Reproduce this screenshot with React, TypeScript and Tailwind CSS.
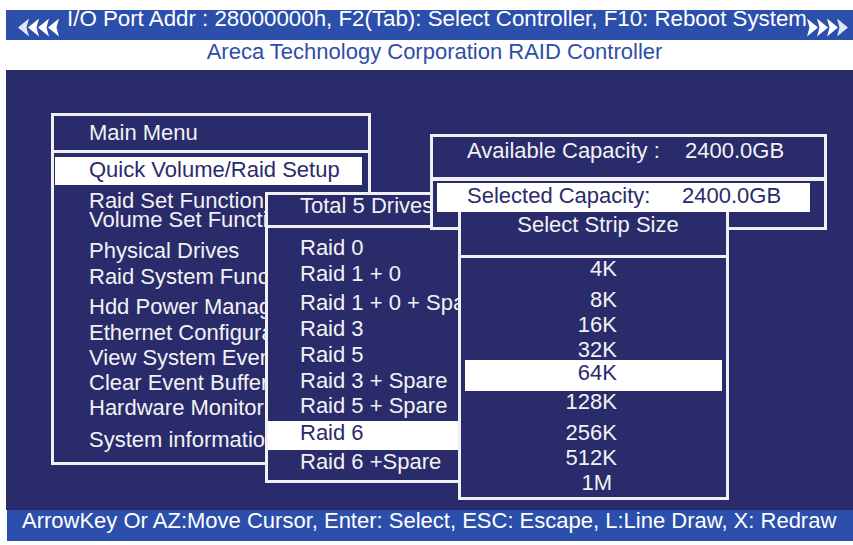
import React from "react";

function Arrows({ dir }: { dir: "left" | "right" }) {
  const offs = [0, 10, 20, 30];
  return (
    <svg width="42" height="19" viewBox="0 0 42 19" className="shrink-0">
      {offs.map((o, i) => (
        <polygon
          key={i}
          points={
            dir === "left"
              ? `${o},9.5 ${o + 11},0.5 ${o + 8.5},9.5 ${o + 11},18.5`
              : `${o + 11},9.5 ${o},0.5 ${o + 2.5},9.5 ${o},18.5`
          }
          fill={dir === "left" ? (i === 0 ? "#dfe6f7" : "#ffffff") : i === 3 ? "#dfe6f7" : "#ffffff"}
        />
      ))}
    </svg>
  );
}

export default function App() {
  return (
    <div className="w-[853px] h-[545px] bg-white overflow-hidden font-['Liberation_Sans',Arial,sans-serif] text-[22px] whitespace-nowrap">
      {/* Top bar */}
      <div className="mt-[10px] ml-[6px] h-[30px] bg-[#2c4fab] flex items-start text-white">
        <div className="ml-[12px] mt-[8px]">
          <Arrows dir="left" />
        </div>
        <div className="ml-[7px] leading-[18px] text-[22.3px]">
          I/O Port Addr : 28000000h, F2(Tab): Select Controller, F10: Reboot System
        </div>
        <div className="ml-auto mr-[5px] mt-[8px]">
          <Arrows dir="right" />
        </div>
      </div>

      {/* Title */}
      <div className="h-[30px] leading-[24px] text-center pl-[16px] text-[#2f4ea6]">
        Areca Technology Corporation RAID Controller
      </div>

      {/* Desktop area */}
      <div className="relative ml-[6px] h-[440px] bg-[#2a2b6b] text-[#f2f2f4]">
        {/* Main Menu */}
        <div className="absolute left-[45px] top-[43px] w-[320px] h-[352px] border-[3px] border-[#f0f0f4] overflow-hidden flex flex-col">
          <div className="h-[37px] leading-[34px] pl-[35px] border-b-[3px] border-[#f0f0f4] shrink-0">
            Main Menu
          </div>
          <div className="flex flex-col">
            <div className="mt-[4px] ml-[1px] mr-[6px] h-[28px] leading-[25px] pl-[34px] bg-white text-[#2a2b6b]">
              Quick Volume/Raid Setup
            </div>
            <div className="mt-[3px] h-[26px] leading-[26px] pl-[35px]">Raid Set Function</div>
            <div className="-mt-[7px] h-[26px] leading-[26px] pl-[35px]">Volume Set Function</div>
            <div className="mt-[5px] h-[26px] leading-[26px] pl-[35px]">Physical Drives</div>
            <div className="h-[26px] leading-[26px] pl-[35px]">Raid System Function</div>
            <div className="mt-[4px] h-[26px] leading-[26px] pl-[35px]">Hdd Power Management</div>
            <div className="h-[26px] leading-[26px] pl-[35px]">Ethernet Configuration</div>
            <div className="-mt-[1px] h-[26px] leading-[26px] pl-[35px]">View System Events</div>
            <div className="-mt-[1px] h-[26px] leading-[26px] pl-[35px]">Clear Event Buffer</div>
            <div className="-mt-[1px] h-[26px] leading-[26px] pl-[35px]">Hardware Monitor</div>
            <div className="mt-[6px] h-[26px] leading-[26px] pl-[35px]">System information</div>
          </div>
        </div>

        {/* Raid level menu */}
        <div className="absolute left-[259px] top-[122px] w-[196px] h-[291px] border-[3px] border-[#f0f0f4] bg-[#2a2b6b] overflow-hidden flex flex-col">
          <div className="h-[33px] leading-[22px] pl-[32px] border-b-[3px] border-[#f0f0f4] shrink-0">
            Total 5 Drives
          </div>
          <div className="flex flex-col">
            <div className="mt-[7px] h-[26px] leading-[26px] pl-[32px]">Raid 0</div>
            <div className="h-[26px] leading-[26px] pl-[32px]">Raid 1 + 0</div>
            <div className="mt-[3px] h-[26px] leading-[26px] pl-[32px]">Raid 1 + 0 + Spare</div>
            <div className="h-[26px] leading-[26px] pl-[32px]">Raid 3</div>
            <div className="h-[26px] leading-[26px] pl-[32px]">Raid 5</div>
            <div className="h-[26px] leading-[26px] pl-[32px]">Raid 3 + Spare</div>
            <div className="-mt-[1px] h-[26px] leading-[26px] pl-[32px]">Raid 5 + Spare</div>
            <div className="mt-[2px] h-[29px] leading-[24px] pl-[32px] bg-white text-[#2a2b6b]">Raid 6</div>
            <div className="-mt-[1px] h-[26px] leading-[26px] pl-[32px]">Raid 6 +Spare</div>
          </div>
        </div>

        {/* Capacity box */}
        <div className="absolute left-[424px] top-[64px] w-[397px] h-[96px] border-[3px] border-[#f0f0f4] bg-[#2a2b6b] flex flex-col">
          <div className="h-[44px] leading-[28px] pl-[34px] border-b-[4px] border-[#f0f0f4] flex shrink-0">
            <span className="w-[218px]">Available Capacity :</span>
            <span>2400.0GB</span>
          </div>
          <div className="mt-[2px] ml-[4px] w-[373px] h-[29px] leading-[25px] pl-[30px] bg-white text-[#2a2b6b] flex">
            <span className="w-[215px]">Selected Capacity:</span>
            <span>2400.0GB</span>
          </div>
        </div>

        {/* Strip size box */}
        <div className="absolute left-[452px] top-[142px] w-[271px] h-[288px] border-[3px] border-t-0 border-[#f0f0f4] bg-[#2a2b6b] flex flex-col">
          <div className="h-[46px] leading-[26px] text-center pl-[9px] border-b-[3px] border-[#f0f0f4] shrink-0">
            Select Strip Size
          </div>
          <div className="flex flex-col text-right">
            <div className="-mt-[2px] h-[26px] leading-[26px] pr-[109px]">4K</div>
            <div className="mt-[5px] h-[26px] leading-[26px] pr-[109px]">8K</div>
            <div className="-mt-[1px] h-[26px] leading-[26px] pr-[109px]">16K</div>
            <div className="-mt-[1px] h-[26px] leading-[26px] pr-[109px]">32K</div>
            <div className="-mt-[3px] mx-[4px] h-[31px] leading-[26px] pr-[105px] bg-white text-[#2a2b6b]">64K</div>
            <div className="-mt-[2px] h-[26px] leading-[26px] pr-[109px]">128K</div>
            <div className="mt-[5px] h-[26px] leading-[26px] pr-[109px]">256K</div>
            <div className="-mt-[1px] h-[26px] leading-[26px] pr-[109px]">512K</div>
            <div className="-mt-[1px] h-[26px] leading-[26px] pr-[114px]">1M</div>
          </div>
        </div>
      </div>

      {/* Bottom bar */}
      <div className="ml-[7px] h-[31px] bg-[#2c4fab] text-white leading-[21px] pl-[15px]">
        ArrowKey Or AZ:Move Cursor, Enter: Select, ESC: Escape, L:Line Draw, X: Redraw
      </div>
    </div>
  );
}
